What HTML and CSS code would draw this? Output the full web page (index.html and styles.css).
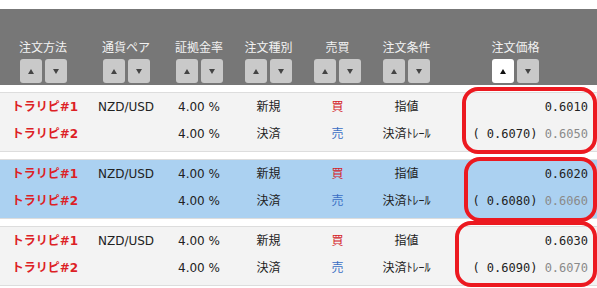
FILE: index.html
```html
<!DOCTYPE html>
<html lang="ja">
<head>
<meta charset="utf-8">
<link rel="stylesheet" href="styles.css">
</head>
<body>
<div class="page">
  <div class="head cols">
    <div class="hcell"><div class="htitle">注文方法</div><div class="btns"><span class="btn up"></span><span class="btn down"></span></div></div>
    <div class="hcell"><div class="htitle">通貨ペア</div><div class="btns"><span class="btn up"></span><span class="btn down"></span></div></div>
    <div class="hcell"><div class="htitle">証拠金率</div><div class="btns"><span class="btn up"></span><span class="btn down"></span></div></div>
    <div class="hcell"><div class="htitle">注文種別</div><div class="btns"><span class="btn up"></span><span class="btn down"></span></div></div>
    <div class="hcell"><div class="htitle">売買</div><div class="btns"><span class="btn up"></span><span class="btn down"></span></div></div>
    <div class="hcell"><div class="htitle">注文条件</div><div class="btns"><span class="btn up"></span><span class="btn down"></span></div></div>
    <div class="hcell"><div class="htitle">注文価格</div><div class="btns"><span class="btn up active"></span><span class="btn down"></span></div></div>
  </div>

  <div class="row cols">
    <div class="c name">トラリピ#1</div><div class="c">NZD/USD</div><div class="c">4.00 %</div><div class="c">新規</div><div class="c buy">買</div><div class="c">指値</div><div class="c price">0.6010</div>
    <div class="c name">トラリピ#2</div><div class="c"></div><div class="c">4.00 %</div><div class="c">決済</div><div class="c sell">売</div><div class="c">決済ﾄﾚｰﾙ</div><div class="c price">( 0.6070) <span class="muted">0.6050</span></div>
  </div>

  <div class="row cols selected">
    <div class="c name">トラリピ#1</div><div class="c">NZD/USD</div><div class="c">4.00 %</div><div class="c">新規</div><div class="c buy">買</div><div class="c">指値</div><div class="c price">0.6020</div>
    <div class="c name">トラリピ#2</div><div class="c"></div><div class="c">4.00 %</div><div class="c">決済</div><div class="c sell">売</div><div class="c">決済ﾄﾚｰﾙ</div><div class="c price">( 0.6080) <span class="muted">0.6060</span></div>
  </div>

  <div class="row cols">
    <div class="c name">トラリピ#1</div><div class="c">NZD/USD</div><div class="c">4.00 %</div><div class="c">新規</div><div class="c buy">買</div><div class="c">指値</div><div class="c price">0.6030</div>
    <div class="c name">トラリピ#2</div><div class="c"></div><div class="c">4.00 %</div><div class="c">決済</div><div class="c sell">売</div><div class="c">決済ﾄﾚｰﾙ</div><div class="c price">( 0.6090) <span class="muted">0.6070</span></div>
  </div>

  <div class="mark mark1"></div>
  <div class="mark mark2"></div>
  <div class="mark mark3"></div>
</div>
</body>
</html>
```

FILE: styles.css
```css
html, body {
  margin: 0;
  padding: 0;
  background: #ffffff;
}
body {
  font-family: "DejaVu Sans", "Noto Sans CJK JP", sans-serif;
  font-size: 12px;
  color: #222222;
  width: 597px;
  height: 288px;
  overflow: hidden;
}
.page {
  position: relative;
  padding-top: 9px;
}
.cols {
  display: grid;
  grid-template-columns: 86px 80px 66px 73px 65px 73px 145px;
  padding-right: 9px;
}
.head {
  background: #777777;
  height: 76px;
  box-sizing: border-box;
  padding-top: 31px;
  margin-bottom: 7px;
}
.hcell {
  display: flex;
  flex-direction: column;
  align-items: center;
}
.htitle {
  color: #f2f2f2;
  font-size: 12px;
  line-height: 16px;
  height: 16px;
  margin-bottom: 3px;
}
.btns {
  display: flex;
  gap: 3px;
}
.btn {
  width: 22px;
  height: 24px;
  background: #c9c9c9;
  border-radius: 3px;
  display: flex;
  align-items: center;
  justify-content: center;
}
.btn.active {
  background: #ffffff;
}
.btn::after {
  content: "";
  width: 0;
  height: 0;
  border-left: 3px solid transparent;
  border-right: 3px solid transparent;
}
.btn.up::after {
  border-bottom: 5px solid #444444;
}
.btn.down::after {
  border-top: 5px solid #444444;
}
.btn.active::after {
  border-bottom-color: #111111;
}
.row {
  background: #f3f3f3;
  border-top: 1px solid #dddddd;
  border-bottom: 1px solid #dddddd;
  height: 60px;
  box-sizing: border-box;
  padding-top: 1px;
  grid-auto-rows: 27px;
  margin-bottom: 7px;
}
.row.selected {
  background: #abd1f1;
}
.c {
  line-height: 27px;
  text-align: center;
  white-space: nowrap;
}
.name {
  color: #dd1f26;
  font-weight: bold;
  padding-left: 4px;
}
.buy {
  color: #d42027;
}
.sell {
  color: #3a6ec4;
}
.price {
  text-align: right;
  font-family: "DejaVu Sans Mono", monospace;
  white-space: pre;
}
.muted {
  color: #8a8a8a;
}
.mark {
  position: absolute;
  border: 4px solid #ec1920;
  border-radius: 16px;
  box-sizing: border-box;
}
.mark1 { left: 462px; top: 87px; width: 135px; height: 67px; }
.mark2 { left: 464px; top: 157px; width: 133px; height: 65px; }
.mark3 { left: 455px; top: 221px; width: 142px; height: 66px; }
```
